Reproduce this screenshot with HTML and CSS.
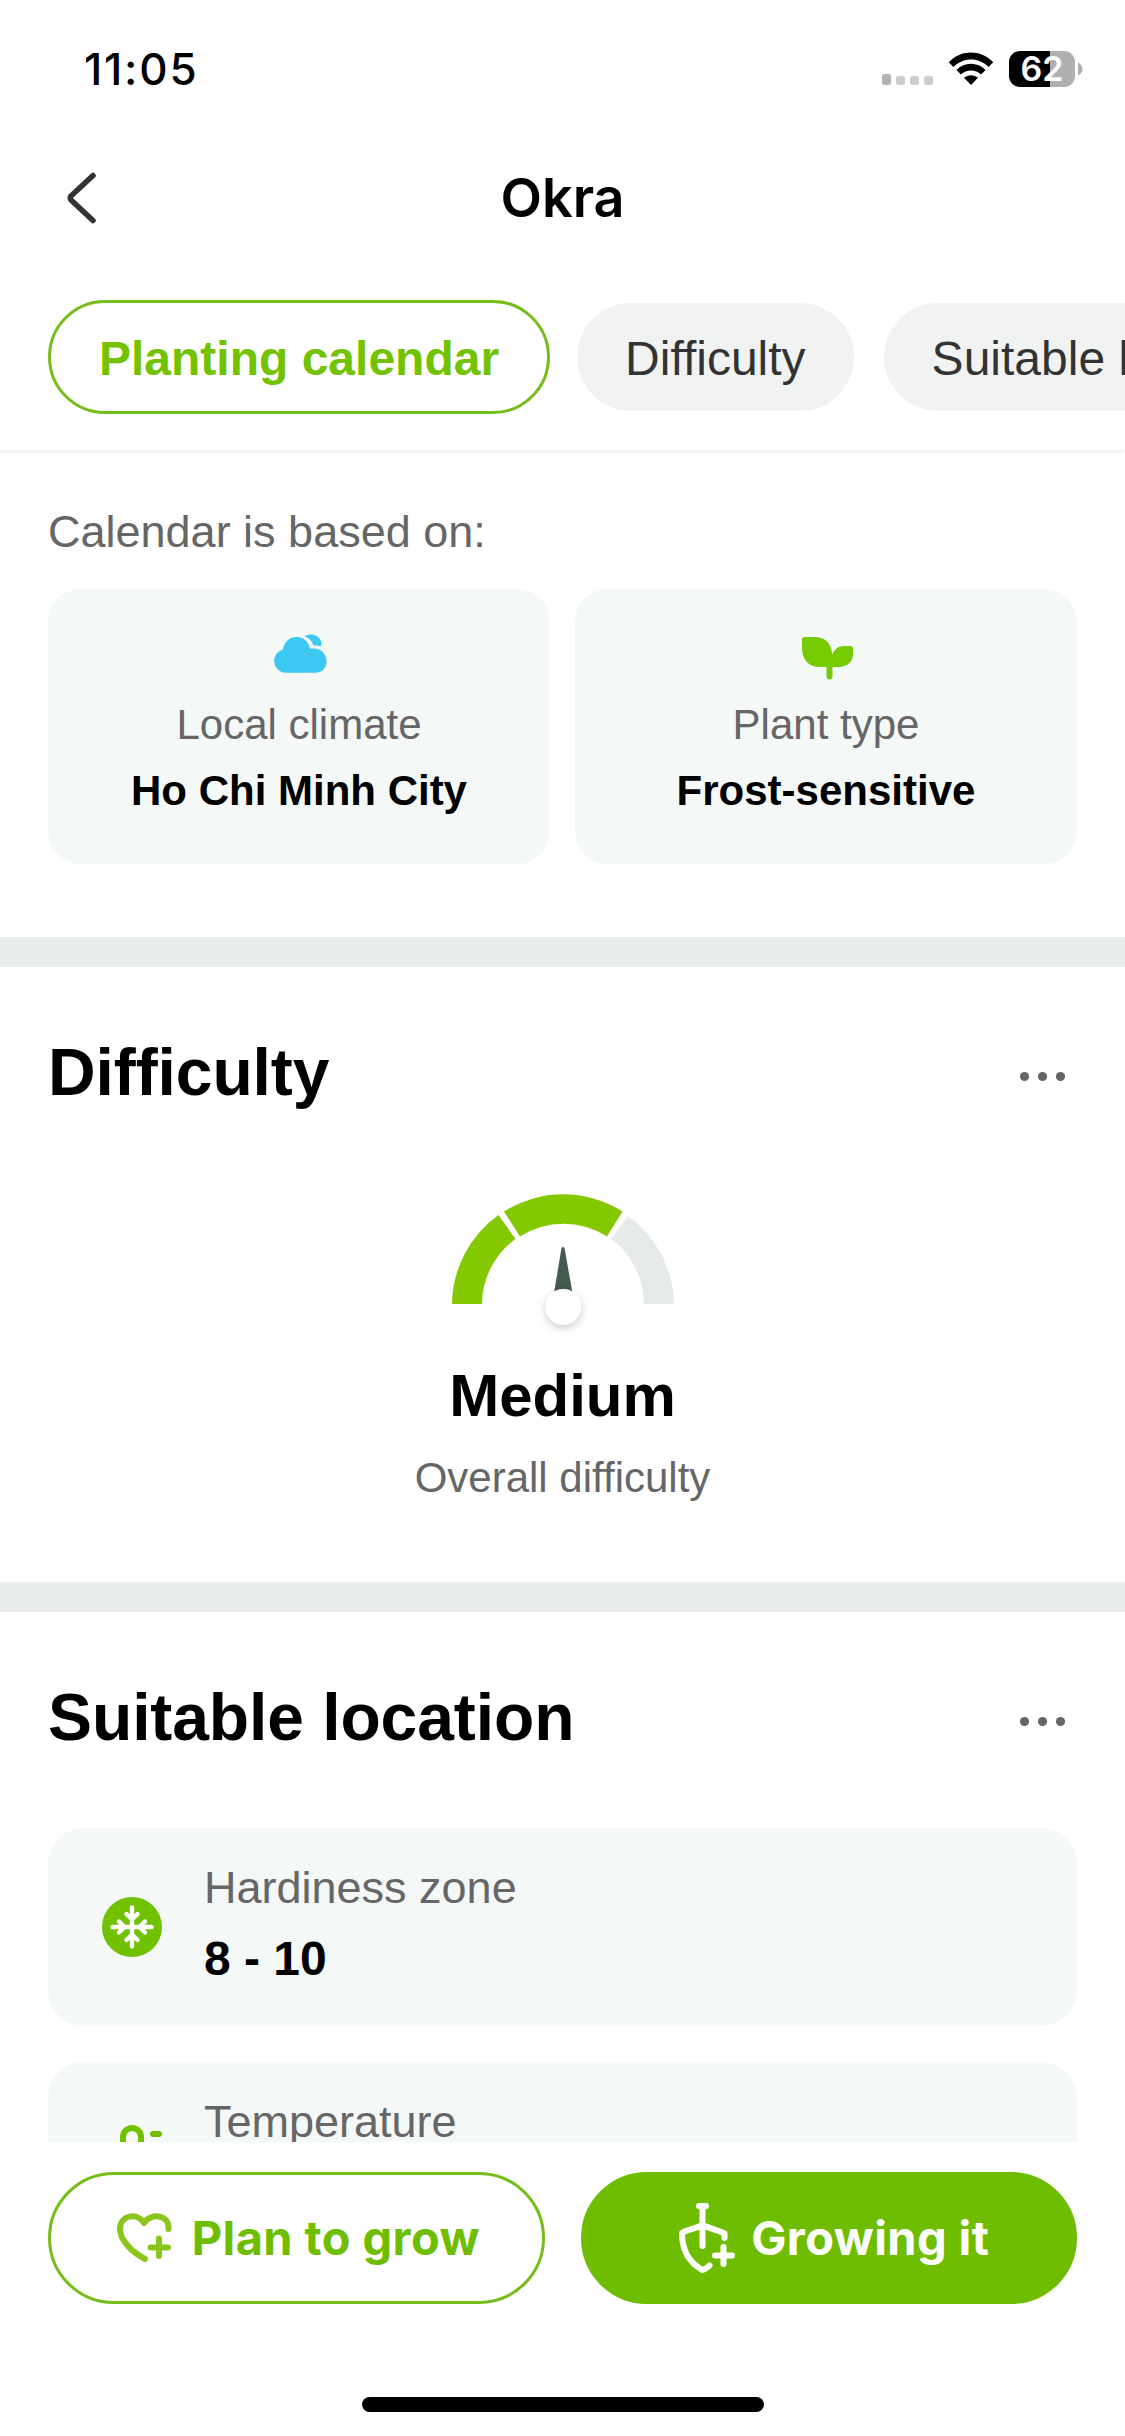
FILE: index.html
```html
<!DOCTYPE html>
<html lang="en">
<head>
<meta charset="utf-8">
<title>Okra</title>
<link rel="stylesheet" href="styles.css">
</head>
<body>
<header class="top">
  <div class="status">
    <span class="time">11:05</span>
    <div class="status-icons">
      <svg class="signal" width="51" height="12" viewBox="0 0 51 12"><rect width="9" height="11" rx="2.5" fill="#b3b3b3"/><g fill="#cdcdcd"><rect x="14" y="2" width="9" height="9" rx="2.5"/><rect x="28" y="2" width="9" height="9" rx="2.5"/><rect x="42" y="2" width="9" height="9" rx="2.5"/></g></svg>
      <svg class="wifi" width="46" height="34" viewBox="0 0 46 34"><path d="M0.8 10.2C13-2.8 33-2.8 45.2 10.2L40.6 15C31 5 15 5 5.4 15Z"/><path d="M8.4 18C16.5 9.8 29.500 9.800 37.600 18L33 22.600C27.500 17 18.500 17 13 22.600Z"/><path d="M16 25.800C20 22.300 26 22.300 30 25.800L23 33Z"/></svg>
      <div class="battery"><span class="battery-level">62</span></div>
      <svg class="cap" width="5" height="14" viewBox="0 0 5 14"><path d="M0 0.500Q4.500 3 4.500 7T0 13.500Z" fill="#b0b0b0"/></svg>
    </div>
  </div>
  <div class="nav">
    <svg class="back" width="36" height="56" viewBox="0 0 36 56"><path d="M33 5.500L11 26Q9.500 28 11 30L33 50.500" fill="none" stroke="#333" stroke-width="5.500" stroke-linecap="round" stroke-linejoin="round"/></svg>
    <h1 class="nav-title">Okra</h1>
  </div>
  <nav class="tabs">
    <a class="tab tab-active">Planting calendar</a>
    <a class="tab">Difficulty</a>
    <a class="tab">Suitable location</a>
  </nav>
</header>

<main class="content">
  <section class="calendar">
    <p class="hint">Calendar is based on:</p>
    <div class="tiles">
      <div class="tile">
        <svg class="tile-icon" width="60" height="54" viewBox="0 0 60 54" fill="#3cc8f0"><path d="M15 44.700A11.800 11.800 0 0 1 13 21.500C14 13.500 20 9 26.500 9C33.500 9 38.500 13.500 40.200 20.700C43 20.300 47 20 51 22.500C60 29 58 44.700 45.500 44.700Z"/><path d="M34.500 8.300C43 3 54.500 10.500 50.800 18.500C48.500 17.600 46.500 17.300 43.300 17.500C42 13 39 10 34.500 8.300Z"/></svg>
        <span class="tile-label">Local climate</span>
        <strong class="tile-value">Ho Chi Minh City</strong>
      </div>
      <div class="tile">
        <svg class="tile-icon tile-icon-leaf" width="60" height="54" viewBox="0 0 60 54" fill="#76cb00"><path d="M9 9H19C31 9 36.500 16 37.200 26.500C39.500 20.500 44 18 50 18H55Q58 18 58 21V26C58 34 52 39 44 39H37.500V48.500A3 3 0 0 1 31.500 48.500V39H25C13 39 7 31 7 20V11.500Q7 9 9 9Z"/></svg>
        <span class="tile-label">Plant type</span>
        <strong class="tile-value">Frost-sensitive</strong>
      </div>
    </div>
  </section>

  <section class="difficulty">
    <div class="section-head">
      <h2 class="section-title">Difficulty</h2>
      <svg class="more" width="48" height="20" viewBox="0 0 48 20" fill="#666"><circle cx="8.500" cy="14.500" r="4.600"/><circle cx="26.500" cy="14.500" r="4.600"/><circle cx="44.500" cy="14.500" r="4.600"/></svg>
    </div>
    <svg class="gauge" width="240" height="150" viewBox="0 0 240 150">
      <g fill="#84c800">
        <path d="M9 119A111 111 0 0 1 55.500 30L72.500 54A81 81 0 0 0 39 119Z"/>
        <path d="M61 26.500A111 111 0 0 1 179.500 26.500L164 51.500A81 81 0 0 0 77 51.500Z"/>
      </g>
      <path d="M185 31A111 111 0 0 1 231 119H201A81 81 0 0 0 168 54Z" fill="#e6eae9"/>
      <path d="M118.500 63Q120 61 121.500 63L129.500 108H111Z" fill="#435a4e"/>
      <circle class="hub" cx="120.300" cy="122" r="18" fill="#fff"/>
    </svg>
    <strong class="level">Medium</strong>
    <span class="level-note">Overall difficulty</span>
  </section>

  <section class="location">
    <div class="section-head">
      <h2 class="section-title">Suitable location</h2>
      <svg class="more" width="48" height="20" viewBox="0 0 48 20" fill="#666"><circle cx="8.500" cy="14.500" r="4.600"/><circle cx="26.500" cy="14.500" r="4.600"/><circle cx="44.500" cy="14.500" r="4.600"/></svg>
    </div>
    <div class="facts">
      <div class="fact">
        <svg class="fact-icon" width="60" height="60" viewBox="0 0 60 60"><circle cx="30" cy="30" r="30" fill="#70c200"/><path d="M30 10.500V49.500M10.500 30H49.500M24.500 17L30 22.500L35.500 17M24.500 43L30 37.500L35.500 43M17 24.500L22.500 30L17 35.500M43 24.500L37.500 30L43 35.500" fill="none" stroke="#fff" stroke-width="4.400" stroke-linecap="round"/></svg>
        <div class="fact-text"><span class="fact-label">Hardiness zone</span><strong class="fact-value">8 - 10</strong></div>
      </div>
      <div class="fact">
        <svg class="fact-icon" width="60" height="60" viewBox="0 0 60 60" fill="none" stroke="#70c200" stroke-width="6" stroke-linecap="round"><path d="M21 35V6A9 9 0 0 1 39 6V35A16 16 0 1 1 21 35ZM51 3H57M51 15H57"/></svg>
        <div class="fact-text"><span class="fact-label">Temperature</span></div>
      </div>
    </div>
  </section>
</main>

<footer class="bottom">
  <div class="actions">
    <button class="action action-plan">
      <svg width="56" height="52" viewBox="0 0 56 52" fill="none" stroke="#8ac61c" stroke-width="6" stroke-linecap="round" stroke-linejoin="round"><path d="M29 47C14 39 4 27 4 17C4 3 21 0 28 11C35 0 54 3 52.500 17M43 26.500V44M34.500 35.500H52"/></svg>
      <span>Plan to grow</span>
    </button>
    <button class="action action-grow">
      <svg width="58" height="72" viewBox="0 0 58 72" fill="none" stroke="#fff" stroke-width="6" stroke-linecap="round" stroke-linejoin="round"><path d="M21 4H28M24.500 4V44M46.500 36V31.500C41 28.500 33 27 24.500 23C17 27 9 27 4 31C4 48 10 60 24.500 68C28 67 30 65 31.500 63.500M45.500 45V62M37 53.500H54"/></svg>
      <span>Growing it</span>
    </button>
  </div>
  <div class="home-bar"></div>
</footer>
</body>
</html>
```
FILE: styles.css
```css
* { box-sizing: border-box; }
body {
  margin: 0;
  height: 2436px;
  overflow: hidden;
  display: flex;
  flex-direction: column;
  background: #fff;
  color: #000;
  font-family: "Liberation Sans", Arial, sans-serif;
}
h1, h2, p { margin: 0; }
svg { display: block; flex: none; overflow: visible; }

.top { flex: none; height: 450px; box-shadow: 0 2px 4px rgba(0, 0, 0, .09); position: relative; z-index: 1; background: #fff; }
.status { height: 138px; padding: 0 42px 0 84px; display: flex; align-items: center; justify-content: space-between; }
.time { font: 500 44px/60px Inter, sans-serif; letter-spacing: 1.8px; }
.status-icons { display: flex; align-items: center; }
.signal { margin: 21px 15px 0 0; }
.wifi { margin-right: 15px; }
.battery { width: 66px; height: 36px; border-radius: 11px; background: linear-gradient(90deg, #000 41px, #b0b0b0 41px); display: flex; align-items: center; justify-content: center; }
.battery-level { color: #fff; font: 600 34px/36px Inter, sans-serif; }
.cap { margin-left: 3px; }

.nav { height: 120px; padding: 0 60px; display: grid; grid-template-columns: 36px 1fr 36px; align-items: center; }
.nav-title { text-align: center; font: 600 54px/66px Inter, sans-serif; }

.tabs { display: flex; gap: 30px; padding: 45px 0 6px 51px; overflow: hidden; }
.tab { flex: none; height: 108px; padding: 0 48px; border-radius: 54px; background: #f1f3f2; color: #333; font-size: 48px; line-height: 111px; white-space: nowrap; }
.tab-active { margin: -3px; height: 114px; border: 3px solid #75bd1a; border-radius: 57px; background: #fff; color: #72c200; font-weight: 700; }

.content { flex: 1; min-height: 0; overflow: hidden; }
.calendar { padding: 55px 48px 73px; border-bottom: 30px solid #e9eeec; }
.hint { color: #666; font-size: 45px; line-height: 54px; }
.tiles { margin-top: 30px; display: grid; grid-template-columns: 1fr 1fr; gap: 25px; }
.tile { height: 275px; padding-top: 39px; border-radius: 33px; background: #f4f8f7; display: flex; flex-direction: column; align-items: center; font-size: 42px; line-height: 66px; }
.tile-icon { margin: 0 0 10px 2px; }
.tile-icon-leaf { margin-left: -2px; }
.tile-label { color: #666; }

.section-head { height: 90px; padding: 0 13px 0 0; display: flex; align-items: center; justify-content: space-between; }
.section-title { font-size: 66px; line-height: 90px; letter-spacing: -.1px; }

.difficulty { padding: 60px 48px 77px; border-bottom: 30px solid #e9eeec; display: flex; flex-direction: column; }
.gauge { margin: 68px auto 25px; }
.hub { filter: drop-shadow(0 3px 4px rgba(0, 0, 0, .2)); }
.level { text-align: center; font-size: 60px; line-height: 72px; }
.level-note { margin-top: 19px; text-align: center; color: #666; font-size: 42px; line-height: 54px; }

.location { padding: 60px 48px 0; }
.facts { margin-top: 66px; display: grid; gap: 36px; }
.fact { height: 198px; padding: 0 54px; border-radius: 36px; background: #f4f8f7; display: flex; align-items: center; gap: 42px; }
.fact-text { display: grid; align-self: flex-start; padding-top: 30px; }
.fact-label { color: #666; font-size: 45px; line-height: 60px; }
.fact-value { font-size: 48px; line-height: 81px; }

.bottom { flex: none; height: 294px; padding: 30px 48px 0; background: #fff; }
.actions { display: grid; grid-template-columns: 1fr 1fr; gap: 36px; }
.action { height: 132px; padding: 0; border: 3px solid #75bd1a; border-radius: 66px; display: flex; align-items: center; justify-content: center; gap: 20px; font: 700 47px/60px Inter, sans-serif; letter-spacing: .4px; }
.action-plan { padding-left: 3px; background: #fff; color: #6ebd00; }
.action-grow { padding-left: 10px; border-color: #6ebd00; background: #6ebd00; color: #fff; gap: 15px; }
.home-bar { width: 402px; height: 15px; margin: 93px auto 0; border-radius: 8px; background: #000; }
```
